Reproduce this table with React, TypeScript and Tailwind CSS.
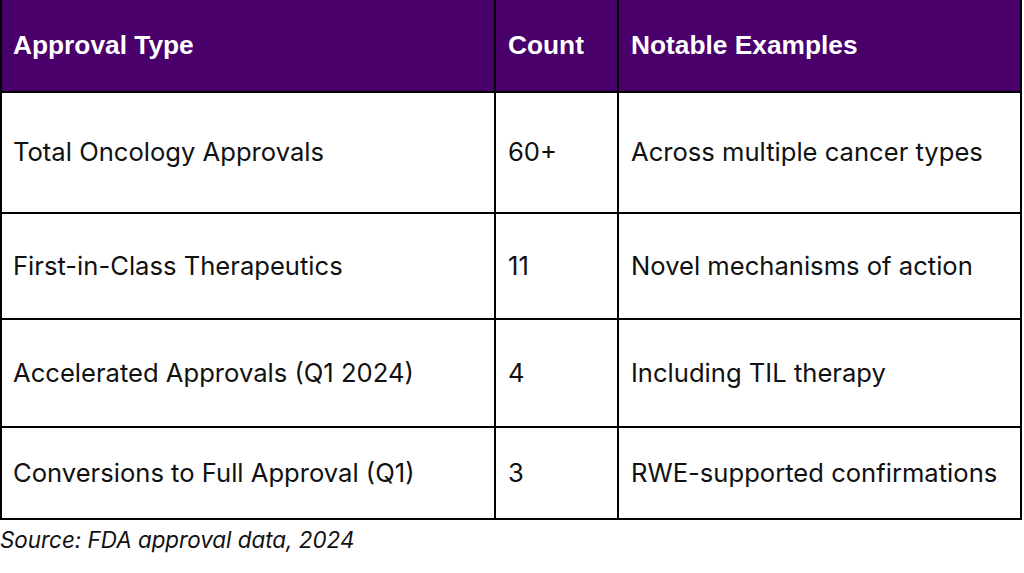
import React from "react";

const rows = [
  { t: "Total Oncology Approvals", c: "60+", n: "Across multiple cancer types", h: "h-[119px]" },
  { t: "First-in-Class Therapeutics", c: "11", n: "Novel mechanisms of action", h: "h-[104px]" },
  { t: "Accelerated Approvals (Q1 2024)", c: "4", n: "Including TIL therapy", h: "h-[106px]" },
  { t: "Conversions to Full Approval (Q1)", c: "3", n: "RWE-supported confirmations", h: "h-[90px]" },
];

export default function App() {
  const body = "bg-white flex items-center text-[25.6px] text-[#111] font-['Inter',sans-serif]";
  const head = "bg-[#4a006b] flex items-center text-[26.3px] font-bold text-white font-['Liberation_Sans',Arial,sans-serif] h-[91px]";
  return (
    <div className="w-[1024px] h-[573px] bg-white">
      <div className="w-[1022px] grid grid-cols-[492px_121px_401px] gap-[2px] bg-black px-[2px] pb-[2px]">
        <div className={`${head} pl-[11px]`}>Approval Type</div>
        <div className={`${head} pl-[12px]`}>Count</div>
        <div className={`${head} pl-[12px]`}>Notable Examples</div>
        {rows.map((r) => (
          <React.Fragment key={r.t}>
            <div className={`${body} ${r.h} pl-[11px]`}>{r.t}</div>
            <div className={`${body} ${r.h} pl-[12px]`}>{r.c}</div>
            <div className={`${body} ${r.h} pl-[12px]`}>{r.n}</div>
          </React.Fragment>
        ))}
      </div>
      <div className="pt-[5px] text-[22.4px] italic text-[#111] font-['Inter',sans-serif] leading-[30px]">
        Source: FDA approval data, 2024
      </div>
    </div>
  );
}
